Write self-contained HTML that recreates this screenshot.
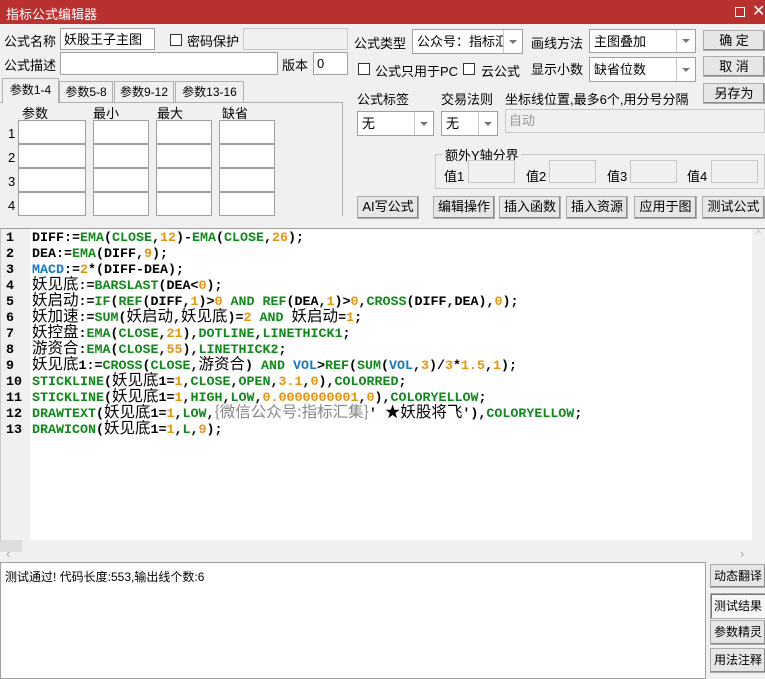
<!DOCTYPE html><html><head><meta charset="utf-8"><style>
*{box-sizing:border-box;margin:0;padding:0}
body{width:765px;height:679px;background:#f0f0f0;position:relative;overflow:hidden;font-family:"Liberation Sans","Noto Sans CJK SC",sans-serif;font-size:12px;color:#000}
.a{position:absolute}
.in{position:absolute;background:#fff;border:1px solid #a0a0a0;padding:3px 3px;font-size:13px;line-height:15px}
.gr{background:#f0f0f0;border-color:#c8c8c8;color:#999}
.cb{position:absolute;width:12px;height:12px;border:1px solid #333;background:#fff}
.sel{position:absolute;background:#fff;border:1px solid #a0a0a0;font-size:13px;padding:3px 22px 3px 4px;line-height:17px;white-space:nowrap;overflow:hidden}
.sel:after{content:"";position:absolute;right:0;top:0;bottom:0;width:18px;border-left:1px solid #c8c8c8;background:#fff}
.sel i{position:absolute;right:5px;top:50%;margin-top:-2px;border-left:4px solid transparent;border-right:4px solid transparent;border-top:4px solid #777;z-index:2}
.btn{position:absolute;background:#e6e6e6;border:1px solid #adadad;box-shadow:inset -1px -1px 0 #8a8a8a;font-size:13px;text-align:center;line-height:20px}
.tab{position:absolute;top:81px;height:21px;border:1px solid #b0b0b0;border-bottom:none;background:#f0f0f0;font-size:12px;text-align:center;line-height:20px}
.code{position:absolute;left:32px;top:231px;font-family:"Liberation Mono","Noto Sans CJK SC",monospace;font-weight:bold;font-size:13.33px;white-space:pre}
.code div{height:16px;line-height:16px}
.code .c,.code .s{display:inline-block;vertical-align:top;height:16px;position:relative;top:-3px;font-family:"Noto Sans CJK SC",sans-serif;font-weight:normal;font-size:15.5px;line-height:15px}
.g{color:#0d8a1a}.o{color:#e8930c}.b{color:#1278c0}.s{color:#888}
.ln{position:absolute;left:6px;top:231px;font-family:"Liberation Mono",monospace;font-weight:bold;font-size:13.33px;line-height:16px;white-space:pre}
</style></head><body>
<div class="a" style="left:0;top:0;width:765px;height:24px;background:#b8312f"></div>
<div class="a" style="left:6px;top:4px;color:#fff;font-size:13px">指标公式编辑器</div>
<div class="a" style="left:735px;top:7px;width:10px;height:10px;border:1px solid #fff"></div>
<div class="a" style="left:752px;top:1px;color:#fff;font-size:16px">✕</div>

<div class="a" style="left:4px;top:31px;font-size:13px">公式名称</div>
<div class="in" style="left:60px;top:28px;width:95px;height:22px">妖股王子主图</div>
<div class="cb" style="left:170px;top:34px"></div>
<div class="a" style="left:187px;top:31px;font-size:13px">密码保护</div>
<div class="in gr" style="left:243px;top:28px;width:105px;height:22px"></div>
<div class="a" style="left:4px;top:55px;font-size:13px">公式描述</div>
<div class="in" style="left:60px;top:52px;width:218px;height:23px"></div>
<div class="a" style="left:282px;top:55px;font-size:13px">版本</div>
<div class="in" style="left:313px;top:52px;width:35px;height:23px">0</div>

<div class="tab" style="left:59px;width:54px">参数5-8</div>
<div class="tab" style="left:114px;width:60px">参数9-12</div>
<div class="tab" style="left:175px;width:69px">参数13-16</div>
<div class="a" style="left:0;top:102px;width:343px;height:114px;border:1px solid #b0b0b0;border-left:none;border-bottom:none"></div>
<div class="tab" style="left:2px;top:78px;width:57px;height:25px;border-bottom:none;line-height:22px;z-index:2">参数1-4</div>
<div class="a" style="left:22px;top:103px;font-size:13px">参数</div>
<div class="a" style="left:93px;top:103px;font-size:13px">最小</div>
<div class="a" style="left:157px;top:103px;font-size:13px">最大</div>
<div class="a" style="left:222px;top:103px;font-size:13px">缺省</div>
<div class="a" style="left:8px;top:122px;font-size:13px;line-height:24px">1<br>2<br>3<br>4</div>

<div class="a" style="left:354px;top:33px;font-size:13px">公式类型</div>
<div class="sel" style="left:412px;top:29px;width:111px;height:25px">公众号：指标汇集<i></i></div>
<div class="a" style="left:531px;top:33px;font-size:13px">画线方法</div>
<div class="sel" style="left:589px;top:29px;width:107px;height:24px">主图叠加<i></i></div>
<div class="cb" style="left:358px;top:63px"></div>
<div class="a" style="left:375px;top:61px;font-size:13px">公式只用于PC</div>
<div class="cb" style="left:463px;top:63px"></div>
<div class="a" style="left:481px;top:61px;font-size:13px">云公式</div>
<div class="a" style="left:531px;top:59px;font-size:13px">显示小数</div>
<div class="sel" style="left:589px;top:57px;width:107px;height:25px">缺省位数<i></i></div>
<div class="btn" style="left:703px;top:30px;width:62px;height:21px">确 定</div>
<div class="btn" style="left:703px;top:56px;width:62px;height:21px">取 消</div>
<div class="btn" style="left:703px;top:83px;width:62px;height:21px">另存为</div>
<div class="a" style="left:357px;top:89px;font-size:13px">公式标签</div>
<div class="a" style="left:441px;top:89px;font-size:13px">交易法则</div>
<div class="a" style="left:505px;top:89px;font-size:13px">坐标线位置,最多6个,用分号分隔</div>
<div class="sel" style="left:357px;top:111px;width:77px;height:25px">无<i></i></div>
<div class="sel" style="left:441px;top:111px;width:57px;height:25px">无<i></i></div>
<div class="in gr" style="left:505px;top:109px;width:260px;height:24px">自动</div>
<div class="a" style="left:435px;top:154px;width:330px;height:35px;border:1px solid #c8c8c8"></div>
<div class="a" style="left:443px;top:145px;font-size:13px;background:#f0f0f0;padding:0 2px">额外Y轴分界</div>
<div class="a" style="left:444px;top:166px;font-size:13px">值1</div>
<div class="a" style="left:526px;top:166px;font-size:13px">值2</div>
<div class="a" style="left:607px;top:166px;font-size:13px">值3</div>
<div class="a" style="left:687px;top:166px;font-size:13px">值4</div>
<div class="in gr" style="left:468px;top:160px;width:47px;height:23px"></div>
<div class="in gr" style="left:549px;top:160px;width:47px;height:23px"></div>
<div class="in gr" style="left:630px;top:160px;width:47px;height:23px"></div>
<div class="in gr" style="left:711px;top:160px;width:47px;height:23px"></div>
<div class="btn" style="left:357px;top:196px;width:62px;height:23px">AI写公式</div>
<div class="btn" style="left:433px;top:196px;width:62px;height:23px">编辑操作</div>
<div class="btn" style="left:499px;top:196px;width:62px;height:23px">插入函数</div>
<div class="btn" style="left:566px;top:196px;width:62px;height:23px">插入资源</div>
<div class="btn" style="left:634px;top:196px;width:63px;height:23px">应用于图</div>
<div class="btn" style="left:702px;top:196px;width:63px;height:23px">测试公式</div>

<div class="a" style="left:0;top:228px;width:765px;height:1px;background:#a0a0a0"></div>
<div class="a" style="left:0;top:229px;width:752px;height:311px;background:#fff"></div>
<div class="a" style="left:0;top:229px;width:30px;height:311px;background:#f0f0f0;border-left:1px solid #c8c8c8"></div>
<div class="a" style="left:752px;top:229px;width:13px;height:311px;background:#f0f0f0;color:#bbb;font-size:10px;text-align:center">^</div>
<div class="a" style="left:0;top:540px;width:22px;height:12px;background:#ddd"></div>
<div class="a" style="left:6px;top:546px;color:#aaa;font-size:13px">‹</div>
<div class="a" style="left:740px;top:546px;color:#aaa;font-size:13px">›</div>
<div class="ln">1
2
3
4
5
6
7
8
9
10
11
12
13</div>
<div class="code"><div>DIFF:=<span class="g">EMA</span>(<span class="g">CLOSE</span>,<span class="o">12</span>)-<span class="g">EMA</span>(<span class="g">CLOSE</span>,<span class="o">26</span>);</div><div>DEA:=<span class="g">EMA</span>(DIFF,<span class="o">9</span>);</div><div><span class="b">MACD</span>:=<span class="o">2</span>*(DIFF-DEA);</div><div><span class="c">妖见底</span>:=<span class="g">BARSLAST</span>(DEA&lt;<span class="o">0</span>);</div><div><span class="c">妖启动</span>:=<span class="g">IF</span>(<span class="g">REF</span>(DIFF,<span class="o">1</span>)&gt;<span class="o">0</span> <span class="g">AND</span> <span class="g">REF</span>(DEA,<span class="o">1</span>)&gt;<span class="o">0</span>,<span class="g">CROSS</span>(DIFF,DEA),<span class="o">0</span>);</div><div><span class="c">妖加速</span>:=<span class="g">SUM</span>(<span class="c">妖启动</span>,<span class="c">妖见底</span>)=<span class="o">2</span> <span class="g">AND</span> <span class="c">妖启动</span>=<span class="o">1</span>;</div><div><span class="c">妖控盘</span>:<span class="g">EMA</span>(<span class="g">CLOSE</span>,<span class="o">21</span>),<span class="g">DOTLINE</span>,<span class="g">LINETHICK1</span>;</div><div><span class="c">游资合</span>:<span class="g">EMA</span>(<span class="g">CLOSE</span>,<span class="o">55</span>),<span class="g">LINETHICK2</span>;</div><div><span class="c">妖见底</span>1:=<span class="g">CROSS</span>(<span class="g">CLOSE</span>,<span class="c">游资合</span>) <span class="g">AND</span> <span class="b">VOL</span>&gt;<span class="g">REF</span>(<span class="g">SUM</span>(<span class="b">VOL</span>,<span class="o">3</span>)/<span class="o">3</span>*<span class="o">1.5</span>,<span class="o">1</span>);</div><div><span class="g">STICKLINE</span>(<span class="c">妖见底</span>1=<span class="o">1</span>,<span class="g">CLOSE</span>,<span class="g">OPEN</span>,<span class="o">3.1</span>,<span class="o">0</span>),<span class="g">COLORRED</span>;</div><div><span class="g">STICKLINE</span>(<span class="c">妖见底</span>1=<span class="o">1</span>,<span class="g">HIGH</span>,<span class="g">LOW</span>,<span class="o">0.0000000001</span>,<span class="o">0</span>),<span class="g">COLORYELLOW</span>;</div><div><span class="g">DRAWTEXT</span>(<span class="c">妖见底</span>1=<span class="o">1</span>,<span class="g">LOW</span>,<span class="s">{微信公众号:指标汇集}</span>' <span class="c">★妖股将飞</span>'),<span class="g">COLORYELLOW</span>;</div><div><span class="g">DRAWICON</span>(<span class="c">妖见底</span>1=<span class="o">1</span>,<span class="g">L</span>,<span class="o">9</span>);</div></div>

<div class="a" style="left:0;top:562px;width:706px;height:117px;background:#fff;border:1px solid #a0a0a0"></div>
<div class="a" style="left:5px;top:568px;font-size:12px">测试通过! 代码长度:553,输出线个数:6</div>
<div class="btn" style="left:710px;top:564px;width:56px;height:24px;font-size:12px;line-height:22px">动态翻译</div>
<div class="btn" style="left:710px;top:593px;width:56px;height:26px;font-size:12px;line-height:24px;background:#f6f6f6;box-shadow:inset 1px 1px 0 #777">测试结果</div>
<div class="btn" style="left:710px;top:620px;width:56px;height:25px;font-size:12px;line-height:23px">参数精灵</div>
<div class="btn" style="left:710px;top:648px;width:56px;height:25px;font-size:12px;line-height:23px">用法注释</div>
<div class="in" style="left:18px;top:120px;width:68px;height:24px"></div><div class="in" style="left:93px;top:120px;width:56px;height:24px"></div><div class="in" style="left:156px;top:120px;width:56px;height:24px"></div><div class="in" style="left:219px;top:120px;width:56px;height:24px"></div>
<div class="in" style="left:18px;top:144px;width:68px;height:24px"></div><div class="in" style="left:93px;top:144px;width:56px;height:24px"></div><div class="in" style="left:156px;top:144px;width:56px;height:24px"></div><div class="in" style="left:219px;top:144px;width:56px;height:24px"></div>
<div class="in" style="left:18px;top:168px;width:68px;height:24px"></div><div class="in" style="left:93px;top:168px;width:56px;height:24px"></div><div class="in" style="left:156px;top:168px;width:56px;height:24px"></div><div class="in" style="left:219px;top:168px;width:56px;height:24px"></div>
<div class="in" style="left:18px;top:192px;width:68px;height:24px"></div><div class="in" style="left:93px;top:192px;width:56px;height:24px"></div><div class="in" style="left:156px;top:192px;width:56px;height:24px"></div><div class="in" style="left:219px;top:192px;width:56px;height:24px"></div>
</body></html>
